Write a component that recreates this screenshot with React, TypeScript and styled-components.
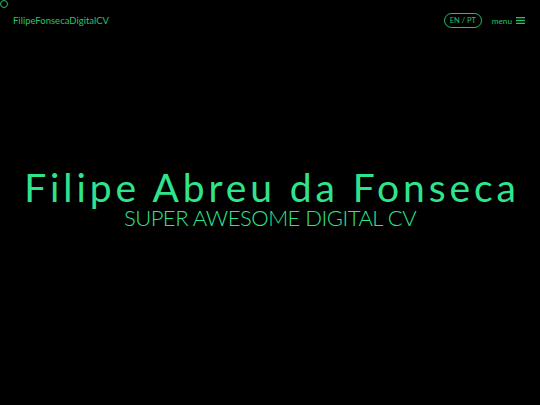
import React from "react";
import styled, { createGlobalStyle } from "styled-components";

const GlobalStyle = createGlobalStyle`
  html, body {
    margin: 0;
    padding: 0;
    background: #000;
  }
  body {
    font-family: "Lato", "Noto Sans", sans-serif;
    color: #2ee58c;
  }
`;

const Page = styled.div`
  position: relative;
  width: 100%;
  height: 405px;
  background: #000;
  display: flex;
  flex-direction: column;
`;

const CursorDot = styled.div`
  position: absolute;
  top: 0;
  left: 0;
  width: 6px;
  height: 6px;
  border: 1.5px solid #22c46a;
  border-radius: 50%;
`;

const Header = styled.header`
  display: flex;
  align-items: center;
  justify-content: space-between;
  padding: 13px 15px 0 13px;
  height: 15px;
`;

const Brand = styled.a`
  font-size: 9.5px;
  color: #22c46a;
  text-decoration: none;
`;

const Actions = styled.div`
  display: flex;
  align-items: center;
  gap: 10px;
`;

const LangPill = styled.button`
  background: transparent;
  border: 1.3px solid #22c46a;
  border-radius: 8px;
  color: #22c46a;
  font-family: "Lato", "Noto Sans", sans-serif;
  font-size: 7.5px;
  height: 15px;
  width: 38px;
  padding: 0;
  cursor: pointer;
`;

const MenuButton = styled.button`
  display: flex;
  align-items: center;
  gap: 4px;
  background: transparent;
  border: none;
  padding: 0;
  color: #22c46a;
  font-family: "Lato", "Noto Sans", sans-serif;
  font-size: 8.2px;
  cursor: pointer;
`;

const Hero = styled.main`
  flex: 1;
  display: flex;
  flex-direction: column;
  align-items: center;
  justify-content: center;
  padding-bottom: 36px;
`;

const Title = styled.h1`
  margin: 0 0 0 4px;
  font-weight: 400;
  font-size: 39px;
  line-height: 36px;
  letter-spacing: 3.9px;
  color: #2ee58c;
`;

const Subtitle = styled.h2`
  margin: 2px 0 0;
  font-weight: 300;
  font-size: 22px;
  line-height: 22px;
  letter-spacing: -0.5px;
  color: #2ee58c;
`;

export default function App() {
  return (
    <>
      <GlobalStyle />
      <Page>
        <CursorDot />
        <Header>
          <Brand href="#">FilipeFonsecaDigitalCV</Brand>
          <Actions>
            <LangPill>EN / PT</LangPill>
            <MenuButton>
              menu
              <svg width="9" height="7" viewBox="0 0 9 7">
                <rect x="0" y="0" width="9" height="1.3" fill="#22c46a" />
                <rect x="0" y="2.85" width="9" height="1.3" fill="#22c46a" />
                <rect x="0" y="5.7" width="9" height="1.3" fill="#22c46a" />
              </svg>
            </MenuButton>
          </Actions>
        </Header>
        <Hero>
          <Title>Filipe Abreu da Fonseca</Title>
          <Subtitle>SUPER AWESOME DIGITAL CV</Subtitle>
        </Hero>
      </Page>
    </>
  );
}
